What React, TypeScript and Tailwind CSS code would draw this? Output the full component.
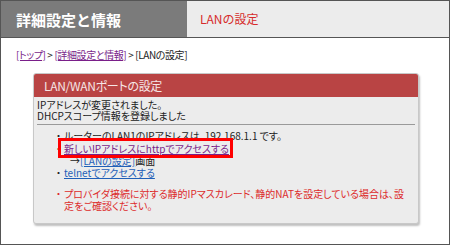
import React from 'react';

const font = "font-['Noto_Sans_CJK_JP','Noto_Sans',sans-serif]";

const App = () => {
  return (
    <div className={`w-[450px] h-[245px] bg-white border border-[#555] flex flex-col ${font}`}>
      {/* Header tabs */}
      <div className="h-[37px] flex border-b border-[#555] shrink-0">
        <div className="w-[186px] bg-[#7b7b7b] flex items-center pl-[15px]">
          <span className="text-white text-[15px] font-bold leading-none">詳細設定と情報</span>
        </div>
        <div className="flex-1 bg-[#ececec] flex items-center pl-[13px]">
          <span className="text-[#d62b2b] text-[12px] leading-none">LANの設定</span>
        </div>
      </div>

      {/* Breadcrumb */}
      <div className="pl-[15px] mt-[11px] text-[10px] leading-[12px] tracking-[-0.4px] text-[#222] [font-feature-settings:'palt']">
        <a className="text-[#7a1f8a] underline">[トップ]</a>
        <span> &gt; </span>
        <a className="text-[#7a1f8a] underline">[詳細設定と情報]</a>
        <span> &gt; [LANの設定]</span>
      </div>

      {/* Card */}
      <div className="ml-[32px] mt-[12px] w-[386px] rounded-[3px] bg-[#ececec] border border-[#c8c8c8] shadow-[1px_2px_2px_rgba(0,0,0,0.25)] overflow-hidden [font-feature-settings:'palt']">
        <div className="h-[23px] bg-[#b94444] flex items-center pl-[10px]">
          <span className="text-[#f6e6e6] text-[12px] leading-none tracking-[-0.3px]">LAN/WANポートの設定</span>
        </div>
        <div className="px-[3px] pt-[2px] text-[10px] leading-[11px] text-[#222]">
          <p>IPアドレスが変更されました。</p>
          <p>DHCPスコープ情報を登録しました</p>
        </div>
        <div className="mx-[3px] mt-[3px] border-t border-[#9a9a9a]" />

        <ul className="pl-[22px] pr-[6px] pt-[5px] pb-[11px] text-[10px] leading-[12px] text-[#222]">
          <li className="flex">
            <span className="w-[8px] shrink-0">・</span>
            <span>ルーターのLAN1のIPアドレスは、192.168.1.1 です。</span>
          </li>
          <li className="flex mt-[1px]">
            <span className="w-[8px] shrink-0">・</span>
            <span className="relative">
              <a className="text-[#7a1f8a] underline">新しいIPアドレスにhttpでアクセスする</a>
              <span className="absolute left-[-6px] right-[-4px] top-[-5px] bottom-[-3px] border-[3px] border-[#ff0000]" />
            </span>
          </li>
          <li className="flex pl-[14px]">
            <span>→ </span>
            <a className="text-[#1f5fb8] underline">[LANの設定]</a>
            <span>画面</span>
          </li>
          <li className="flex">
            <span className="w-[8px] shrink-0">・</span>
            <a className="text-[#1f5fb8] underline">telnetでアクセスする</a>
          </li>
          <li className="flex mt-[9px] text-[#dd2b2b]">
            <span className="w-[8px] shrink-0">・</span>
            <span>プロバイダ接続に対する静的IPマスカレード、静的NATを設定している場合は、設定をご確認ください。</span>
          </li>
        </ul>
      </div>
    </div>
  );
};

export default App;
